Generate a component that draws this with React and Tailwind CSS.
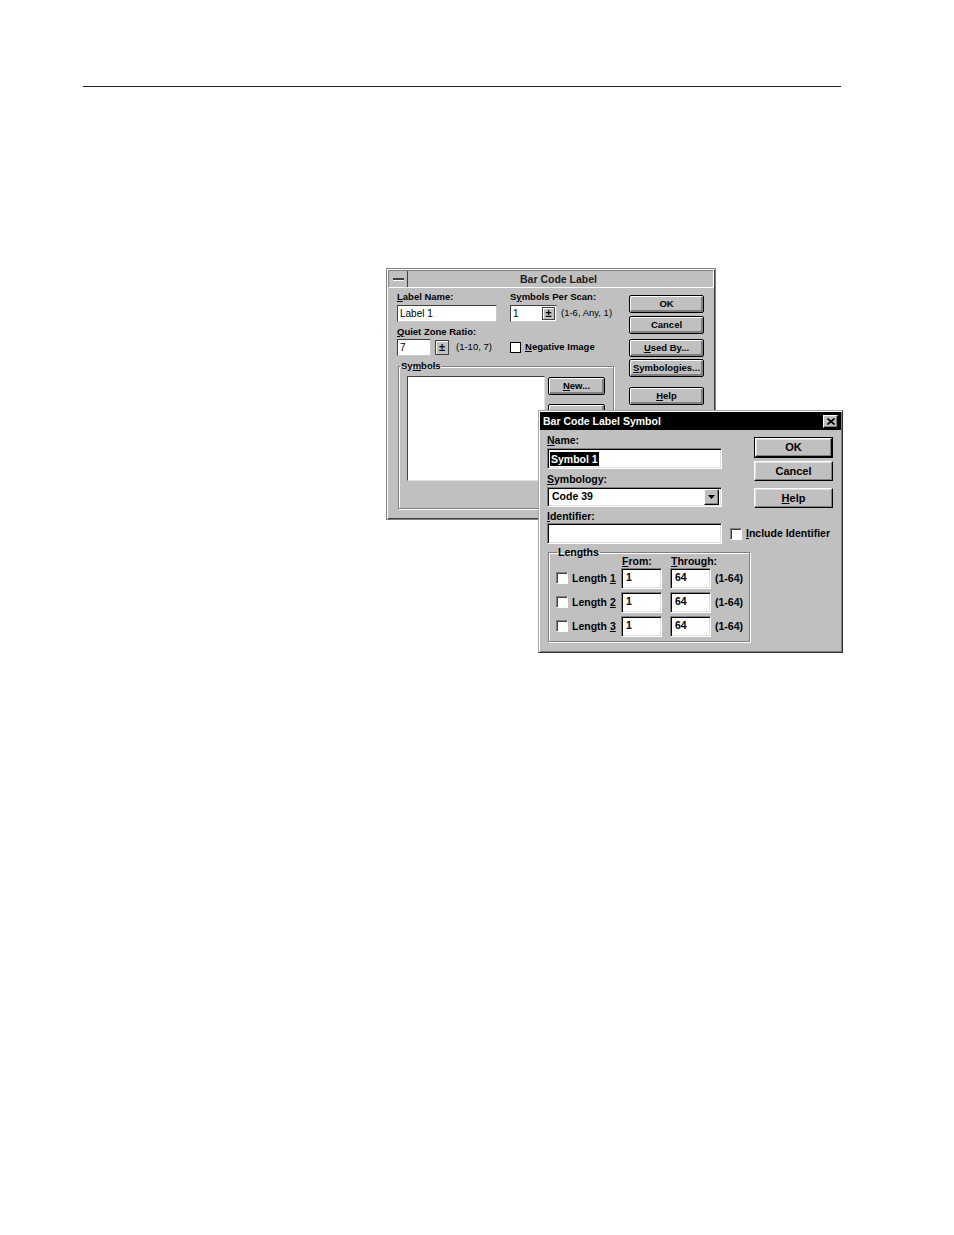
const FONT = "font-['Liberation_Sans',Arial,sans-serif]"

function K({ children }) {
  return <span className="underline underline-offset-[1px] decoration-[1px]">{children}</span>
}

// ---- back window (3.1 look) ----
function OldButton({ children, className = '' }) {
  return (
    <div className={'flex items-center justify-center h-[18px] border border-black rounded-[2px] bg-[#c0c0c0] shadow-[inset_1px_1px_0_#fff,inset_-2px_-2px_0_#808080] text-[9.5px] font-bold leading-none text-black whitespace-nowrap ' + className}>
      {children}
    </div>
  )
}

function OldInput({ children, className = '' }) {
  return (
    <div className={'h-[17px] bg-white border border-t-[#404040] border-l-[#404040] border-r-[#c8c8c8] border-b-[#c8c8c8] pl-[2px] text-[10px] leading-[15px] text-black ' + className}>
      {children}
    </div>
  )
}

function Spin({ className = '' }) {
  return (
    <div className={'flex items-center justify-center border border-[#404040] bg-[#c0c0c0] shadow-[inset_1px_1px_0_#fff] text-[11px] font-bold leading-none text-black ' + className}>
      ±
    </div>
  )
}

function BackDialog() {
  return (
    <div className="absolute left-[386px] top-[268px] w-[330px] h-[252px] border border-[#808080] bg-[#c0c0c0] shadow-[inset_1px_1px_0_#fff,inset_-1px_-1px_0_#404040] flex flex-col overflow-hidden">
      <div className="mx-[1px] mt-[1px] h-[18px] flex border border-t-[#808080] border-l-[#808080] border-r-white border-b-white">
        <div className="w-[19px] flex items-center justify-center border-r border-[#404040]">
          <div className="w-[11px] h-[2px] bg-[#404040] shadow-[0_1px_0_#fff]" />
        </div>
        <div className="flex-1 text-center text-[10.5px] font-bold leading-[16px] text-[#202020] pr-[4px]">Bar Code Label</div>
      </div>

      <div className="flex pt-[3px] pl-[10px]">
        <div className="w-[217px] shrink-0 flex flex-col text-[9.5px] font-bold text-black whitespace-nowrap">
          <div className="flex">
            <div className="w-[113px] shrink-0">
              <div className="h-[12px] leading-[12px]"><K>L</K>abel Name:</div>
              <OldInput className="mt-[2px] w-[100px] font-normal">Label 1</OldInput>
            </div>
            <div>
              <div className="h-[12px] leading-[12px]">S<K>y</K>mbols Per Scan:</div>
              <div className="mt-[2px] flex items-center">
                <div className="w-[47px] h-[17px] bg-white border border-t-[#404040] border-l-[#404040] border-r-[#c8c8c8] border-b-[#c8c8c8] flex items-center justify-between">
                  <span className="pl-[2px] text-[10px] font-normal">1</span>
                  <Spin className="h-[13px] w-[13px] mr-[1px]" />
                </div>
                <span className="ml-[4px] font-normal">(1-6, Any, 1)</span>
              </div>
            </div>
          </div>

          <div className="mt-[4px] h-[12px] leading-[12px]"><K>Q</K>uiet Zone Ratio:</div>
          <div className="mt-[1px] flex items-center">
            <div className="w-[113px] shrink-0 flex items-center">
              <OldInput className="w-[34px] font-normal">7</OldInput>
              <Spin className="ml-[4px] w-[14px] h-[15px]" />
              <span className="ml-[7px] font-normal">(1-10, 7)</span>
            </div>
            <div className="w-[11px] h-[11px] bg-white border border-black" />
            <span className="ml-[4px]"><K>N</K>egative Image</span>
          </div>

          <fieldset className="mt-[4px] ml-[1px] w-[216px] border border-[#808080] shadow-[inset_1px_1px_0_#fff,1px_1px_0_#fff] pt-[4px] pb-[27px]">
            <legend className="ml-[1px] px-[1px] h-[12px] leading-[12px] font-bold">Sy<K>m</K>bols</legend>
            <div className="flex">
              <div className="ml-[8px] w-[138px] h-[105px] bg-white border border-t-[#404040] border-l-[#404040] border-r-[#dfdfdf] border-b-[#dfdfdf]" />
              <div className="ml-[3px] flex flex-col">
                <OldButton className="mt-[1px] w-[57px]"><K>N</K>ew...</OldButton>
                <OldButton className="mt-[9px] w-[57px]" />
              </div>
            </div>
          </fieldset>
        </div>

        <div className="ml-[15px] mt-[4px] w-[75px] shrink-0 flex flex-col">
          <OldButton className="w-[75px]">OK</OldButton>
          <OldButton className="mt-[3px] w-[75px]">Cancel</OldButton>
          <OldButton className="mt-[5px] w-[75px]"><K>U</K>sed By...</OldButton>
          <OldButton className="mt-[2px] w-[75px]"><K>S</K>ymbologies...</OldButton>
          <OldButton className="mt-[10px] w-[75px]"><K>H</K>elp</OldButton>
        </div>
      </div>
    </div>
  )
}

// ---- front window (95 look) ----
function NewButton({ children, className = '', isDefault = false }) {
  const face = (
    <div className="flex-1 flex items-center justify-center border border-t-white border-l-white border-r-black border-b-black shadow-[inset_-1px_-1px_0_#808080,inset_1px_1px_0_#dfdfdf] bg-[#c0c0c0] text-[11px] font-bold leading-none text-black">
      {children}
    </div>
  )
  if (isDefault) {
    return <div className={'flex border border-black ' + className}>{face}</div>
  }
  return <div className={'flex ' + className}>{face}</div>
}

function Field({ children, className = '' }) {
  return (
    <div className={'bg-white border border-t-[#808080] border-l-[#808080] border-r-white border-b-white shadow-[inset_1px_1px_0_#000,inset_-1px_-1px_0_#dfdfdf] ' + className}>
      {children}
    </div>
  )
}

function Check({ className = '' }) {
  return (
    <div className={'w-[12px] h-[12px] bg-white border border-t-[#808080] border-l-[#808080] border-r-white border-b-white shadow-[inset_1px_1px_0_#404040] ' + className} />
  )
}

function LengthRow({ n, className = '' }) {
  return (
    <div className={'flex items-center ' + className}>
      <div className="w-[65px] flex items-center">
        <Check className="-mt-[1px]" />
        <span className="ml-[4px]">Length <K>{n}</K></span>
      </div>
      <Field className="w-[41px] h-[21px] pl-[4px] pt-[2px] leading-[12px]">1</Field>
      <Field className="ml-[8px] w-[41px] h-[21px] pl-[4px] pt-[2px] leading-[12px]">64</Field>
      <span className="ml-[4px]">(1-64)</span>
    </div>
  )
}

function FrontDialog() {
  return (
    <div className="absolute left-[538px] top-[410px] w-[305px] h-[243px] border border-t-[#a8a8a8] border-l-[#a8a8a8] border-r-[#303030] border-b-[#303030] bg-[#c0c0c0] p-[1px] shadow-[inset_1px_1px_0_#fff,inset_-1px_-1px_0_#808080] flex flex-col">
      <div className="h-[18px] bg-black flex items-center justify-between pl-[3px] pr-[3px]">
        <span className="text-[10.5px] font-bold text-white leading-none">Bar Code Label Symbol</span>
        <div className="w-[15px] h-[13px] flex items-center justify-center bg-[#c0c0c0] border border-t-white border-l-white border-r-black border-b-black shadow-[inset_-1px_-1px_0_#808080]">
          <svg width="8" height="7" viewBox="0 0 8 7">
            <path d="M0.5 0.5 L7.5 6.5 M7.5 0.5 L0.5 6.5" stroke="#000" strokeWidth="1.6" />
          </svg>
        </div>
      </div>

      <div className="pl-[7px] pt-[4px] text-[10.5px] font-bold text-black">
        <div className="flex">
          <div className="w-[175px] flex flex-col">
            <div className="h-[12px] leading-[12px]"><K>N</K>ame:</div>
            <Field className="mt-[2px] h-[21px] flex items-center pl-[2px]">
              <span className="bg-black text-white px-[1px] leading-[14px]">Symbol 1</span>
            </Field>
            <div className="mt-[4px] h-[12px] leading-[12px]"><K>S</K>ymbology:</div>
            <Field className="mt-[2px] h-[20px] flex items-center justify-between pl-[4px] pr-[2px]">
              <span>Code 39</span>
              <div className="w-[15px] h-[16px] flex items-center justify-center bg-[#c0c0c0] border border-t-white border-l-white border-r-black border-b-black shadow-[inset_-1px_-1px_0_#808080]">
                <svg width="7" height="4" viewBox="0 0 7 4">
                  <path d="M0 0 H7 L3.5 4 Z" fill="#000" />
                </svg>
              </div>
            </Field>
          </div>
          <div className="ml-[32px] mt-[3px] w-[79px] flex flex-col">
            <NewButton isDefault className="h-[21px]">OK</NewButton>
            <NewButton className="mt-[3px] h-[20px]">Cancel</NewButton>
            <NewButton className="mt-[7px] h-[20px]"><K>H</K>elp</NewButton>
          </div>
        </div>

        <div className="mt-[2px] h-[12px] leading-[12px]"><K>I</K>dentifier:</div>
        <div className="mt-[1px] flex items-center">
          <Field className="w-[175px] h-[21px]" />
          <Check className="ml-[8px]" />
          <span className="ml-[4px]"><K>I</K>nclude Identifier</span>
        </div>

        <fieldset className="mt-[2px] ml-[1px] w-[202px] border border-[#808080] shadow-[inset_1px_1px_0_#fff,1px_1px_0_#fff] pl-[7px] pb-[4px]">
          <legend className="ml-[1px] px-[1px] h-[12px] leading-[12px]">Lengths</legend>
          <div className="-mt-[3px] flex h-[12px] leading-[12px]">
            <div className="w-[66px]" />
            <div className="w-[49px]"><K>F</K>rom:</div>
            <div><K>T</K>hrough:</div>
          </div>
          <LengthRow n="1" className="mt-[1px]" />
          <LengthRow n="2" className="mt-[3px]" />
          <LengthRow n="3" className="mt-[3px]" />
        </fieldset>
      </div>
    </div>
  )
}

export default function App() {
  return (
    <div className={'relative w-[954px] h-[1235px] bg-white ' + FONT}>
      <div className="pt-[86px] pl-[83px]">
        <div className="w-[758px] h-[1px] bg-[#222]" />
      </div>
      <BackDialog />
      <FrontDialog />
    </div>
  )
}
